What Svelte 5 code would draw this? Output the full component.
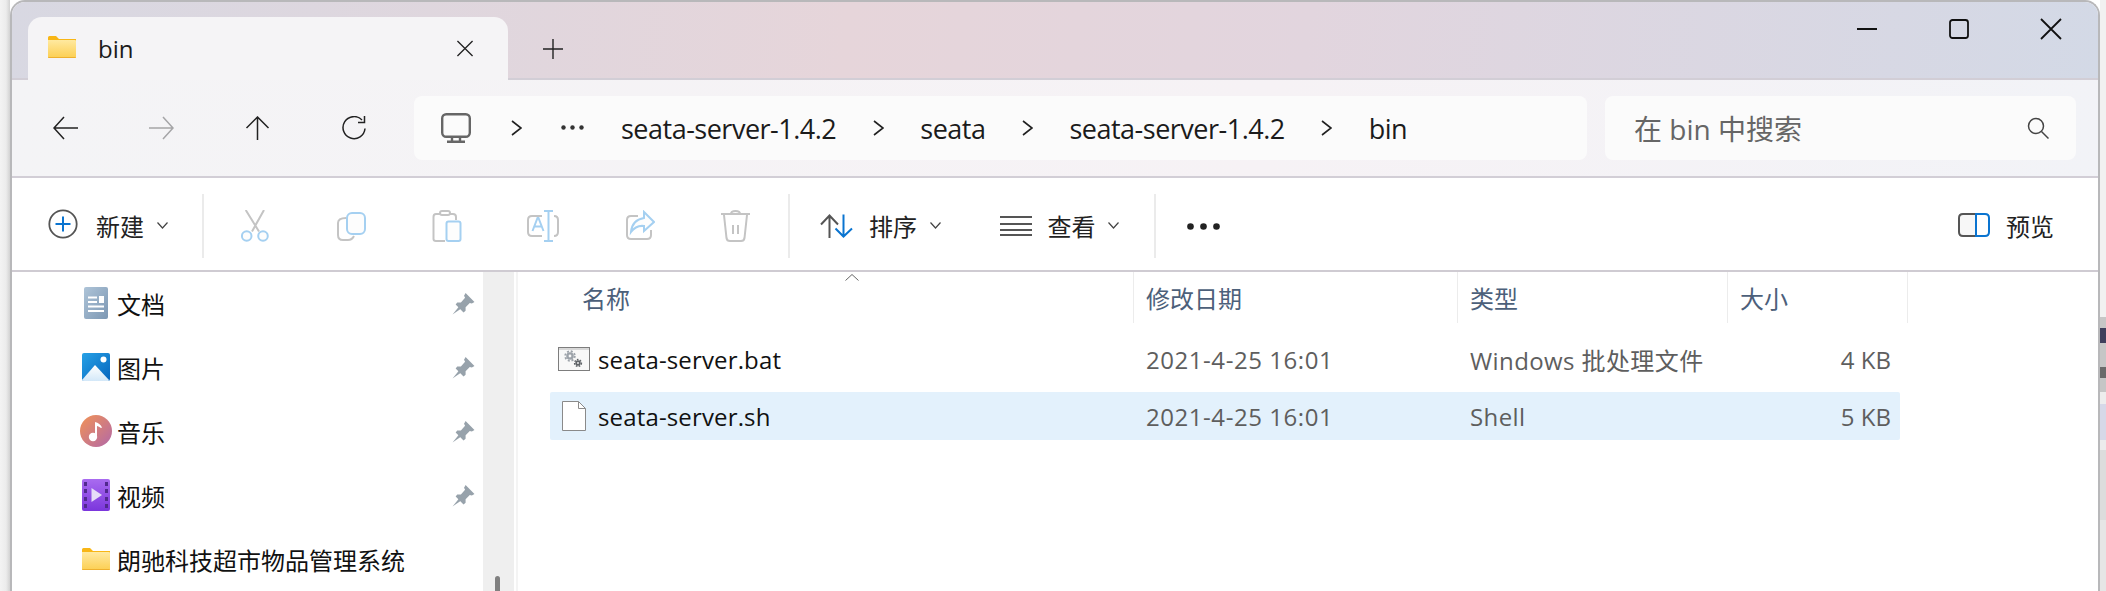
<script>
  const sidebar = [
    { label: "文档", icon: "doc", pin: true },
    { label: "图片", icon: "pic", pin: true },
    { label: "音乐", icon: "music", pin: true },
    { label: "视频", icon: "video", pin: true },
    { label: "朗驰科技超市物品管理系统", icon: "folder", pin: false },
  ];
  const files = [
    { name: "seata-server.bat", date: "2021-4-25 16:01", type: "Windows 批处理文件", size: "4 KB", icon: "bat", selected: false },
    { name: "seata-server.sh", date: "2021-4-25 16:01", type: "Shell", size: "5 KB", icon: "sh", selected: true },
  ];
  const crumbs = ["seata-server-1.4.2", "seata", "seata-server-1.4.2", "bin"];
</script>

{#snippet folder()}
  <svg class="ico-folder" viewBox="0 0 28 22">
    <defs>
      <linearGradient id="fg" x1="0" y1="0" x2="0" y2="1">
        <stop offset="0" stop-color="#ffe9a0" />
        <stop offset="1" stop-color="#fccf52" />
      </linearGradient>
    </defs>
    <path d="M0 1.5Q0 0 1.5 0H8L11 3H28V5H0Z" fill="#f8b616" />
    <path d="M0 4H27Q28 4 28 5V21Q28 22 27 22H1Q0 22 0 21Z" fill="url(#fg)" />
    <path d="M0 21H28Q28 22 27 22H1Q0 22 0 21Z" fill="#eeb02e" />
  </svg>
{/snippet}

{#snippet pin()}
  <svg class="ico-pin" viewBox="0 0 22 22">
    <path d="M13 1L21.500 9.500 19 11 17 10.500 13 14.500 13 18 11 19.500 3.500 12 5 10 8.500 10 12.500 5.500 11.500 3.500Z" fill="#97a2ab" />
    <path d="M6.500 14L0.500 21.500 8.500 16Z" fill="#97a2ab" />
  </svg>
{/snippet}

<div class="page">
  <div class="shadow-left"></div>
  <div class="window">
    <header class="titlebar">
      <div class="tab">
        {@render folder()}
        <span class="tab-name">bin</span>
        <svg class="tab-x" viewBox="0 0 18 18"><path d="M1 1L17 17M17 1L1 17" /></svg>
      </div>
      <svg class="tab-plus" viewBox="0 0 20 20"><path d="M10 0V20M0 10H20" /></svg>
      <div class="controls">
        <svg viewBox="0 0 20 20"><path d="M0 10H20" /></svg>
        <svg viewBox="0 0 20 20"><rect x="1" y="1" width="18" height="18" rx="2.500" /></svg>
        <svg viewBox="0 0 20 20"><path d="M0 0L20 20M20 0L0 20" /></svg>
      </div>
    </header>

    <nav class="navbar">
      <div class="nav-btns">
        <svg viewBox="0 0 25 24"><path d="M25 12H1M11 1L1 12 11 23" /></svg>
        <svg viewBox="0 0 25 24" class="off"><path d="M0 12H24M14 1L24 12 14 23" /></svg>
        <svg viewBox="0 0 25 24"><path d="M12.500 24V1M1.500 12L12.500 1 23.500 12" /></svg>
        <svg viewBox="0 0 25 24"><path d="M21 4A11 11 0 1 0 24 12.500M23.500 0V6.500H17" /></svg>
      </div>
      <div class="address">
        <svg class="pc" viewBox="0 0 30 30"><rect x="1.200" y="1.200" width="27.600" height="22.500" rx="4" /><path d="M11 24V28M19 24V28M6 28.700H24" /></svg>
        <svg class="chev" viewBox="0 0 11 16"><path d="M1 1L10 8 1 15" /></svg>
        <svg class="dots" viewBox="0 0 23 5"><circle cx="2.500" cy="2.500" r="2.200" /><circle cx="11.500" cy="2.500" r="2.200" /><circle cx="20.500" cy="2.500" r="2.200" /></svg>
        {#each crumbs as crumb, i}
          <span class="crumb">{crumb}</span>
          {#if i < crumbs.length - 1}
            <svg class="chev" viewBox="0 0 11 16"><path d="M1 1L10 8 1 15" /></svg>
          {/if}
        {/each}
      </div>
      <div class="search">
        <span>在 bin 中搜索</span>
        <svg viewBox="0 0 22 22"><circle cx="9" cy="9" r="7.500" /><path d="M14.500 14.500L21.500 21.500" /></svg>
      </div>
    </nav>

    <div class="toolbar">
      <button class="tool new">
        <svg class="plus" viewBox="0 0 30 30">
          <circle cx="15" cy="15" r="13.700" fill="none" stroke="#555" stroke-width="1.800" />
          <path d="M15 7.500V22.500M7.500 15H22.500" stroke="#0a74d0" stroke-width="2" />
        </svg>
        <span>新建</span>
        <svg class="caret" viewBox="0 0 11 7"><path d="M0.500 0.500L5.500 6 10.500 0.500" /></svg>
      </button>
      <i class="sep first"></i>
      <div class="actions">
        <svg viewBox="0 0 32 32">
          <path class="g" d="M6.700 0L20 21.500M25 0L13 21.500" />
          <circle class="b" cx="7.700" cy="26" r="4.800" /><circle class="b" cx="24" cy="26" r="4.800" />
        </svg>
        <svg viewBox="0 0 32 32">
          <path class="g" d="M11 8Q3 8 3 13V25Q3 30 8 30H13Q17 30 19 26" />
          <rect class="b" x="12" y="3" width="18" height="21" rx="5" />
        </svg>
        <svg viewBox="0 0 32 32">
          <path class="g" d="M9 4H5Q2.500 4 2.500 7V29Q2.500 31 5 31H14M19 4H22Q25 4 25 7V10" />
          <rect class="g" x="9" y="1" width="10" height="4" rx="2" />
          <rect class="b" x="15.500" y="11.500" width="14" height="19.500" rx="2" />
        </svg>
        <svg viewBox="0 0 32 32">
          <path class="g" d="M15 6H5Q1 6 1 10V22Q1 26 5 26H15M27 6Q31 6 31 10V22Q31 26 27 26" />
          <path class="b nofill" d="M17 1H26M21.500 1V31M17 31H26M5.500 21L10.500 8H11.500L16.500 21M7.500 16.500H14.500" />
        </svg>
        <svg viewBox="0 0 32 32">
          <path class="g" d="M15 6H8Q4 6 4 10V25Q4 29 8 29H24Q28 29 28 25V20" />
          <path class="b" d="M21 2L31 12 21 21V16Q13 15 8 22 9 10 21 8Z" />
        </svg>
        <svg viewBox="0 0 32 32">
          <path class="g" d="M2 4H31M5 5L7.500 28Q8 31 11 31H22Q25 31 25.500 28L28 5M12 4Q12 1 16.500 1T21 4M14 15V24M19 15V24" />
        </svg>
      </div>
      <i class="sep"></i>
      <button class="tool sort">
        <svg class="sort-ico" viewBox="0 0 33 24">
          <path d="M9.500 24V1.500M1 10.500L9.500 1.500 18 10.500" stroke="#555" />
          <path d="M23.500 0.500V22.500M15.500 14.500L23.500 22.500 32 14.500" stroke="#0a74d0" />
        </svg>
        <span>排序</span>
        <svg class="caret" viewBox="0 0 11 7"><path d="M0.500 0.500L5.500 6 10.500 0.500" /></svg>
      </button>
      <button class="tool view">
        <svg class="view-ico" viewBox="0 0 32 20"><path d="M0 1H32M0 8H32M0 14H32M0 19H32" /></svg>
        <span>查看</span>
        <svg class="caret" viewBox="0 0 11 7"><path d="M0.500 0.500L5.500 6 10.500 0.500" /></svg>
      </button>
      <i class="sep last"></i>
      <svg class="more" viewBox="0 0 33 7"><circle cx="3.500" cy="3.500" r="3.300" /><circle cx="16.500" cy="3.500" r="3.300" /><circle cx="29.500" cy="3.500" r="3.300" /></svg>
      <button class="tool preview">
        <svg class="pv" viewBox="0 0 32 24">
          <path d="M17 1H5Q1 1 1 5V19Q1 23 5 23H17" fill="#f7f7f7" stroke="#555" stroke-width="2" />
          <path d="M18 1H27Q31 1 31 5V19Q31 23 27 23H18Z" fill="none" stroke="#0a74d0" stroke-width="2" />
        </svg>
        <span>预览</span>
      </button>
    </div>

    <main class="content">
      <aside class="sidebar">
        {#each sidebar as item}
          <div class="side-row">
            <span class="side-ico">
              {#if item.icon === "doc"}
                <svg viewBox="0 0 24 32" class="s-doc">
                  <defs><linearGradient id="dg" x1="0" y1="0" x2="1" y2="1"><stop offset="0" stop-color="#aec4d8" /><stop offset="1" stop-color="#7c97b3" /></linearGradient></defs>
                  <rect width="24" height="32" rx="2" fill="url(#dg)" />
                  <path d="M4 10.500H13M4 15H13M4 19.500H20M4 24H20" stroke="#fff" stroke-width="2" />
                  <rect x="15" y="9" width="5" height="7" fill="#fff" />
                </svg>
              {:else if item.icon === "pic"}
                <svg viewBox="0 0 28 28" class="s-pic">
                  <defs>
                    <linearGradient id="pg" x1="0" y1="0" x2="1" y2="1"><stop offset="0" stop-color="#27a1e6" /><stop offset="1" stop-color="#0565bd" /></linearGradient>
                    <linearGradient id="pw" x1="0" y1="0" x2="0" y2="1"><stop offset="0" stop-color="#fff" /><stop offset="1" stop-color="#d3e8f8" /></linearGradient>
                  </defs>
                  <rect width="28" height="28" rx="2" fill="url(#pg)" />
                  <path d="M0 27L13 12 27 27Q27 28 26 28H2Q0 28 0 27Z" fill="url(#pw)" />
                  <circle cx="21.500" cy="6.500" r="3" fill="#fff" />
                </svg>
              {:else if item.icon === "music"}
                <svg viewBox="0 0 32 32" class="s-music">
                  <defs><linearGradient id="mg" x1="0" y1="0" x2="1" y2="1"><stop offset="0" stop-color="#f29355" /><stop offset="1" stop-color="#b268a8" /></linearGradient></defs>
                  <circle cx="16" cy="16" r="16" fill="url(#mg)" />
                  <circle cx="13" cy="22" r="4.200" fill="#fff" />
                  <path d="M15 22V7Q20 8 22 12.500L21 13Q19 11.500 17 11V22Z" fill="#fff" />
                </svg>
              {:else if item.icon === "video"}
                <svg viewBox="0 0 28 32" class="s-video">
                  <defs><linearGradient id="vg" x1="0" y1="0" x2="0" y2="1"><stop offset="0" stop-color="#a96bf0" /><stop offset="1" stop-color="#7b36dc" /></linearGradient></defs>
                  <rect width="28" height="32" rx="2" fill="url(#vg)" />
                  <path d="M2 3H5V7H2ZM2 10H5V14H2ZM2 18H5V22H2ZM2 25H5V29H2ZM23 3H26V7H23ZM23 10H26V14H23ZM23 18H26V22H23ZM23 25H26V29H23Z" fill="#51288f" />
                  <path d="M9.500 9L20 16 9.500 23Z" fill="#e6ddf8" />
                </svg>
              {:else}
                {@render folder()}
              {/if}
            </span>
            <span class="side-label">{item.label}</span>
            {#if item.pin}{@render pin()}{/if}
          </div>
        {/each}
      </aside>
      <div class="scroll"><i class="thumb"></i></div>
      <section class="list">
        <svg class="sort-mark" viewBox="0 0 14 7"><path d="M0.500 6.500L7 0.500 13.500 6.500" /></svg>
        <div class="head">
          <span class="h h-name">名称</span>
          <span class="h">修改日期</span>
          <span class="h">类型</span>
          <span class="h">大小</span>
        </div>
        <div class="rows">
          {#each files as f}
            <div class="file" class:selected={f.selected}>
              <span class="name">
                {#if f.icon === "bat"}
                  <svg class="f-bat" viewBox="0 0 32 24">
                    <rect x="0.500" y="0.500" width="31" height="23" fill="#f8f8f8" stroke="#7d7d7d" />
                    <rect x="1" y="1" width="30" height="2" fill="#d8d8d8" />
                    <circle cx="12" cy="9" r="2.600" fill="none" stroke="#9da3aa" stroke-width="2.400" />
                    <circle cx="12" cy="9" r="4.800" fill="none" stroke="#9da3aa" stroke-width="1.800" stroke-dasharray="2 1.800" />
                    <circle cx="20" cy="16" r="1.800" fill="none" stroke="#606468" stroke-width="1.800" />
                    <circle cx="20" cy="16" r="3.400" fill="none" stroke="#606468" stroke-width="1.500" stroke-dasharray="1.600 1.300" />
                  </svg>
                {:else}
                  <svg class="f-sh" viewBox="0 0 24 30">
                    <path d="M0.500 0.500H16.500L23.500 7.500V29.500H0.500Z" fill="#fff" stroke="#8a8a8a" />
                    <path d="M16.500 0.500V7.500H23.500" fill="none" stroke="#8a8a8a" />
                  </svg>
                {/if}
                <span>{f.name}</span>
              </span>
              <span class="cell date">{f.date}</span>
              <span class="cell type">{f.type}</span>
              <span class="cell size">{f.size}</span>
            </div>
          {/each}
        </div>
      </section>
    </main>
  </div>
  <div class="shadow-right"></div>
</div>

<style>
  :global(body) {
    background: #fff;
    overflow: hidden;
  }

  .page {
    width: 2106px;
    height: 591px;
    overflow: hidden;
    display: flex;
    font-family: "Open Sans", "Noto Sans CJK SC", sans-serif;
    font-size: 24px;
    color: #1b1b1b;
  }

  .shadow-left {
    width: 10px;
    flex: none;
    background: linear-gradient(90deg, #f3f3f3 0, #ececec 6px, #d2d2d2 10px);
  }

  /* bits of the desktop showing behind the window */
  .shadow-right {
    width: 6px;
    flex: none;
    background: linear-gradient(
      180deg,
      #f1f1f1 0 317px,
      #c6c6c6 317px 328px,
      #3f3f5c 328px 343px,
      #c6c6c6 343px 367px,
      #6a6a6a 367px 378px,
      #c6c6c6 378px 392px,
      #ededed 392px 404px,
      #d6d8e8 404px 440px,
      #ececec 440px 450px,
      #dcdcdc 450px 520px,
      #e6e6e6 520px
    );
  }

  .window {
    width: 2090px;
    height: 640px;
    flex: none;
    background: #fff;
    border-radius: 15px 15px 0 0;
    border: solid #b8b8ba;
    border-width: 2px 2px 0 2px;
    box-sizing: border-box;
    overflow: hidden;
  }

  .titlebar {
    height: 78px;
    display: flex;
    align-items: flex-end;
    padding-left: 16px;
    background: linear-gradient(96deg, #d8d8e2 0, #e6d5da 40%, #e2d5de 62%, #d3d9e6 100%);
    border-bottom: 2px solid #d2ced6;
    box-sizing: border-box;
    position: relative;
  }

  .tab {
    width: 480px;
    height: 63px;
    margin-bottom: -2px;
    background: #f5f4f6;
    border-radius: 14px 14px 0 0;
    display: flex;
    align-items: center;
    padding-left: 20px;
    box-sizing: border-box;
    position: relative;
    z-index: 1;
  }

  .tab .ico-folder {
    width: 28px;
    height: 22px;
    margin-top: -4px;
  }

  .tab-name {
    margin: -1px 0 0 22px;
  }

  .tab-x {
    width: 18px;
    height: 17px;
    margin: 0 34px 0 auto;
    fill: none;
    stroke: #222;
    stroke-width: 1.400;
  }

  .tab-plus {
    width: 20px;
    height: 20px;
    margin: 0 0 19px 35px;
    fill: none;
    stroke: #222;
    stroke-width: 1.400;
  }

  .controls {
    position: absolute;
    right: 37px;
    top: 17px;
    display: flex;
    gap: 72px;
  }

  .controls svg {
    width: 20px;
    height: 20px;
    fill: none;
    stroke: #111;
    stroke-width: 1.800;
    overflow: visible;
  }

  .navbar {
    height: 98px;
    background: linear-gradient(96deg, #f4f4f6, #f6f2f5 60%, #f2f3f7);
    border-bottom: 2px solid #d2ced6;
    box-sizing: border-box;
    display: flex;
    align-items: center;
  }

  .nav-btns {
    width: 402px;
    flex: none;
    display: flex;
    align-items: center;
    padding-left: 41px;
    box-sizing: border-box;
    gap: 71px;
  }

  .nav-btns svg {
    width: 25px;
    height: 24px;
    fill: none;
    stroke: #222;
    stroke-width: 1.500;
  }

  .nav-btns .off {
    stroke: #a5a5a7;
  }

  .address,
  .search {
    height: 64px;
    background: #fbfbfb;
    border-radius: 8px;
    display: flex;
    align-items: center;
    box-sizing: border-box;
    flex: none;
  }

  .address {
    width: 1173px;
    padding-left: 27px;
    font-size: 27px;
    letter-spacing: -0.500px;
  }

  .pc {
    width: 30px;
    height: 30px;
    flex: none;
    margin-right: 3px;
    fill: none;
    stroke: #666;
    stroke-width: 2.400;
  }

  .chev {
    width: 11px;
    height: 16px;
    margin: 0 36.500px;
    fill: none;
    stroke: #222;
    stroke-width: 1.600;
    flex: none;
  }

  .dots {
    width: 23px;
    height: 5px;
    flex: none;
    margin: 0 37px 2px 3px;
    fill: #333;
  }

  .search {
    width: 471px;
    margin-left: 18px;
    padding: 0 27px 0 29px;
    justify-content: space-between;
    color: #666;
    font-size: 28px;
  }

  .search svg {
    width: 22px;
    height: 22px;
    fill: none;
    stroke: #444;
    stroke-width: 1.500;
  }

  .toolbar {
    height: 94px;
    background: #fff;
    border-bottom: 2px solid #cfcbd2;
    box-sizing: border-box;
    display: flex;
    align-items: center;
  }

  .tool {
    display: flex;
    align-items: center;
    background: none;
    border: 0;
    padding: 0;
    font: inherit;
    color: #222;
  }

  .tool span {
    margin-top: 2px;
  }

  .tool svg {
    flex: none;
  }

  .new {
    margin-left: 36px;
  }

  .plus {
    width: 30px;
    height: 30px;
    margin-right: 18px;
  }

  .caret {
    width: 11px;
    height: 7px;
    margin: 2px 0 0 12.500px;
    fill: none;
    stroke: #444;
    stroke-width: 1.200;
  }

  .sep {
    width: 2px;
    height: 64px;
    margin-top: 4px;
    background: #ebebeb;
    flex: none;
  }

  .sep.first {
    margin-left: 34.500px;
  }

  .sep.last {
    margin-left: 35px;
  }

  .actions {
    display: grid;
    grid-template-columns: repeat(6, 96px);
    justify-items: center;
    padding: 0 5px 0 3px;
    margin-top: 4px;
  }

  .actions svg {
    width: 32px;
    height: 32px;
    fill: none;
    stroke-width: 2;
  }

  .g {
    stroke: #c4c4c4;
    fill: none;
  }

  .b {
    stroke: #a5d0f1;
    fill: #fdfdfd;
  }

  .b.nofill {
    fill: none;
  }

  .sort {
    margin-left: 30px;
  }

  .sort-ico {
    width: 33px;
    height: 24px;
    margin: 3px 16px 0 0;
    fill: none;
    stroke-width: 2;
  }

  .view {
    margin-left: 59px;
  }

  .view-ico {
    width: 32px;
    height: 20px;
    margin: 3px 16px 0 0;
    fill: none;
    stroke: #555;
    stroke-width: 2;
  }

  .more {
    width: 33px;
    height: 7px;
    margin: 4px 0 0 31px;
    fill: #222;
    flex: none;
  }

  .preview {
    margin-left: auto;
    margin-right: 44px;
  }

  .pv {
    width: 32px;
    height: 24px;
    margin: 1px 16px 0 0;
  }

  .content {
    height: 320px;
    display: flex;
  }

  .sidebar {
    width: 471px;
    padding: 0 0 0 70px;
    margin-top: -1px;
    box-sizing: border-box;
    flex: none;
  }

  .side-row {
    height: 64px;
    display: flex;
    align-items: center;
    position: relative;
  }

  .side-ico {
    width: 35px;
    flex: none;
  }

  .side-ico svg {
    display: block;
  }

  .s-doc {
    width: 24px;
    height: 32px;
    margin-left: 2px;
  }

  .s-pic {
    width: 28px;
    height: 28px;
  }

  .s-music {
    width: 32px;
    height: 32px;
    margin-left: -2px;
  }

  .s-video {
    width: 28px;
    height: 32px;
  }

  .side-ico .ico-folder {
    width: 28px;
    height: 22px;
  }

  .side-label {
    color: #111;
    white-space: nowrap;
  }

  .ico-pin {
    width: 23px;
    height: 23px;
    position: absolute;
    right: 8px;
  }

  .scroll {
    width: 31px;
    flex: none;
    background: #efefef;
    position: relative;
  }

  .thumb {
    position: absolute;
    left: 12px;
    top: 304px;
    width: 5px;
    height: 40px;
    background: #808080;
    border-radius: 2.500px;
  }

  .list {
    flex: 1;
    position: relative;
    border-left: 2px solid #f4f4f4;
    margin-left: 2px;
    padding-left: 32px;
  }

  .sort-mark {
    position: absolute;
    left: 327px;
    top: 2px;
    width: 14px;
    height: 7px;
    fill: none;
    stroke: #666;
  }

  .head {
    display: grid;
    grid-template-columns: 583px 324px 270px 181px;
    height: 51px;
  }

  .h {
    color: #4c607a;
    border-left: 1px solid #ececec;
    padding: 0 0 1px 12px;
    display: flex;
    align-items: center;
  }

  .h-name {
    border-left: 0;
    padding-left: 32px;
  }

  .h:last-child {
    border-right: 1px solid #ececec;
  }

  .rows {
    padding-top: 12px;
    display: flex;
    flex-direction: column;
    gap: 9px;
  }

  .file {
    display: grid;
    grid-template-columns: 583px 324px 270px 173px;
    width: 1350px;
    height: 48px;
    border-radius: 2px;
    align-items: center;
  }

  .selected {
    background: #e3f1fc;
  }

  .name {
    display: flex;
    align-items: center;
    color: #111;
    gap: 8px;
    padding-left: 8px;
    letter-spacing: 0.150px;
  }

  .f-bat {
    width: 32px;
    height: 24px;
    flex: none;
  }

  .f-sh {
    width: 24px;
    height: 30px;
    flex: none;
    margin: 0 4px;
  }

  .cell {
    color: #5e5e5e;
    padding-left: 13px;
    white-space: nowrap;
  }

  .date {
    letter-spacing: 0.550px;
  }

  .type {
    letter-spacing: 0.400px;
  }

  .size {
    text-align: right;
    padding: 0 9px 0 0;
  }
</style>
